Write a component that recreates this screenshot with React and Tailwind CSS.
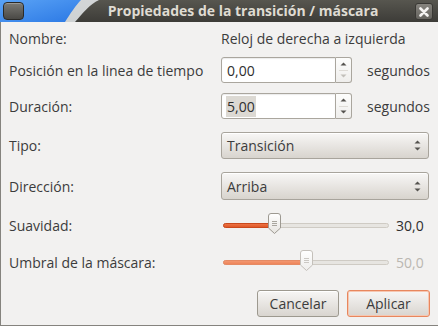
import React from 'react'

function ArrowUp({ disabled }) {
  return (
    <svg width="7" height="4" viewBox="0 0 7 4">
      <path d="M0.5 3.5 L3.5 0.5 L6.5 3.5 Z" fill={disabled ? '#c2bfba' : '#55534f'} />
    </svg>
  )
}

function ArrowDown({ disabled }) {
  return (
    <svg width="7" height="4" viewBox="0 0 7 4">
      <path d="M0.5 0.5 L3.5 3.5 L6.5 0.5 Z" fill={disabled ? '#c2bfba' : '#55534f'} />
    </svg>
  )
}

function Spin({ value, downDisabled, selected }) {
  return (
    <div className="flex w-[131px] h-[26px]">
      <div className="flex-1 flex items-center pl-[4px] bg-white border border-[#aaa69e] rounded-l-[3px] shadow-[inset_0_1px_1px_rgba(0,0,0,0.08)]">
        <span className={selected ? 'bg-[#dcd9d3] text-[#2e2e2e] px-[1px]' : 'text-[#2e2e2e] px-[1px]'}>{value}</span>
      </div>
      <div className="w-[16px] flex flex-col bg-gradient-to-b from-[#fdfdfc] to-[#efeeec] border border-l-0 border-[#aaa69e] rounded-r-[3px]">
        <div className="flex-1 flex items-center justify-center pt-[1px]">
          <ArrowUp />
        </div>
        <div className="h-px mx-[3px] bg-[#dedbd6]" />
        <div className="flex-1 flex items-center justify-center pb-[1px]">
          <ArrowDown disabled={downDisabled} />
        </div>
      </div>
    </div>
  )
}

function Combo({ label }) {
  return (
    <div className="w-[208px] h-full flex items-center justify-between pl-[5px] pr-[7px] rounded-[3px] border border-[#a8a49c] bg-gradient-to-b from-[#f8f7f6] to-[#d8d4ce] shadow-[inset_0_1px_0_#ffffff]">
      <span className="text-[#3c3c3c]">{label}</span>
      <div className="flex flex-col gap-[3px]">
        <ArrowUp />
        <ArrowDown />
      </div>
    </div>
  )
}

function Slider({ pos, value, disabled }) {
  const fillFrom = disabled ? '#f39a74' : '#ef7648'
  const fillTo = disabled ? '#ee8256' : '#dd5423'
  const fillStroke = disabled ? '#e58a64' : '#c9491d'
  const knobStroke = disabled ? '#c4c0ba' : '#9d9991'
  const id = disabled ? 'b' : 'a'
  return (
    <div className="flex items-center h-full">
      <svg width="170" height="24" viewBox="0 0 170 24" className="ml-[1px]">
        <defs>
          <linearGradient id={'fill' + id} x1="0" y1="0" x2="0" y2="1">
            <stop offset="0" stopColor={fillFrom} />
            <stop offset="1" stopColor={fillTo} />
          </linearGradient>
          <linearGradient id={'knob' + id} x1="0" y1="0" x2="0" y2="1">
            <stop offset="0" stopColor="#ffffff" />
            <stop offset="1" stopColor={disabled ? '#eeedeb' : '#e6e3df'} />
          </linearGradient>
        </defs>
        <rect x="1.5" y="10.5" width="165" height="4" rx="2" fill="#e7e5e1" stroke="#cfcbc4" />
        <rect x="1.5" y="10.5" width={pos + 3} height="4" rx="2" fill={'url(#fill' + id + ')'} stroke={fillStroke} />
        <path
          d={`M${pos + 0.5} 3 a2.5 2.5 0 0 1 2.5 -2.5 h7 a2.5 2.5 0 0 1 2.5 2.5 v12 l-6 5.5 l-6 -5.5 Z`}
          fill={'url(#knob' + id + ')'}
          stroke={knobStroke}
        />
        <g stroke={disabled ? '#cbc8c3' : '#a9a59e'}>
          <line x1={pos + 4} y1="8.5" x2={pos + 9} y2="8.5" />
          <line x1={pos + 4} y1="10.5" x2={pos + 9} y2="10.5" />
          <line x1={pos + 4} y1="12.5" x2={pos + 9} y2="12.5" />
        </g>
      </svg>
      <span className={disabled ? 'ml-[4px] text-[#bab7b1]' : 'ml-[4px] text-[#2e2e2e]'}>{value}</span>
    </div>
  )
}

function Row({ label, className, children }) {
  return (
    <div className={'flex items-center ' + className}>
      <div className="w-[212px] text-[#3c3c3c]">{label}</div>
      <div className="flex items-center h-full">{children}</div>
    </div>
  )
}

export default function App() {
  return (
    <div className="w-[438px] h-[326px] flex flex-col overflow-hidden bg-[#f2f1f0] font-['Open_Sans',sans-serif] text-[14px]">
      {/* Title bar */}
      <div className="relative h-[22px] shrink-0 flex items-center justify-center pl-[48px] bg-gradient-to-b from-[#57564f] to-[#3d3c38]">
        <svg className="absolute left-0 top-0" width="110" height="22" viewBox="0 0 110 22">
          <defs>
            <linearGradient id="blue" x1="0" y1="0" x2="1" y2="1">
              <stop offset="0" stopColor="#5aa3f6" />
              <stop offset="1" stopColor="#2b78e4" />
            </linearGradient>
          </defs>
          <path d="M0 0 H99 C90 4 82 14 75 22 H0 Z" fill="#e9ecef" opacity="0.85" />
          <path d="M0 0 H81 C76 5 70 14 65 22 H0 Z" fill="url(#blue)" />
        </svg>
        <div className="absolute left-[3px] top-[2px] w-[21px] h-[18px] rounded-[4px] border border-[#2b2a27] bg-gradient-to-b from-[#7b7a75] to-[#4a4945] shadow-[inset_0_1px_0_rgba(255,255,255,0.25)]" />
        <span className="relative font-bold text-[#dfdbd2] text-[14px] leading-none">Propiedades de la transición / máscara</span>
        <div className="absolute right-[5px] top-[3px] w-[18px] h-[17px] rounded-[3px] border border-[#3a3935] bg-gradient-to-b from-[#86847e] to-[#66645f] flex items-center justify-center">
          <svg width="10" height="10" viewBox="0 0 10 10">
            <path d="M1.5 1.5 L8.5 8.5 M8.5 1.5 L1.5 8.5" stroke="#f4f3f1" strokeWidth="2.6" strokeLinecap="round" />
          </svg>
        </div>
      </div>

      {/* Body */}
      <div className="flex-1 flex flex-col pl-[8px] border-l border-b border-[#85837e]">
        <Row label="Nombre:" className="mt-[5px] h-[22px]">
          <span className="text-[#3c3c3c]">Reloj de derecha a izquierda</span>
        </Row>
        <Row label="Posición en la linea de tiempo" className="mt-[8px] h-[26px]">
          <Spin value="0,00" downDisabled />
          <span className="ml-[15px] text-[#3c3c3c]">segundos</span>
        </Row>
        <Row label="Duración:" className="mt-[10px] h-[26px]">
          <Spin value="5,00" selected />
          <span className="ml-[15px] text-[#3c3c3c]">segundos</span>
        </Row>
        <Row label="Tipo:" className="mt-[13px] h-[27px]">
          <Combo label="Transición" />
        </Row>
        <Row label="Dirección:" className="mt-[13px] h-[28px]">
          <Combo label="Arriba" />
        </Row>
        <Row label="Suavidad:" className="mt-[13px] h-[24px]">
          <Slider pos={46} value="30,0" />
        </Row>
        <Row label="Umbral de la máscara:" className="mt-[13px] h-[24px]">
          <Slider pos={78} value="50,0" disabled />
        </Row>
        <div className="mt-[16px] h-[27px] flex justify-end gap-[8px] pr-[8px]">
          <button className="w-[82px] h-full rounded-[3px] border border-[#9d998f] bg-gradient-to-b from-[#f7f6f5] to-[#d9d5cf] shadow-[inset_0_1px_0_#ffffff] text-[#3c3c3c]">
            Cancelar
          </button>
          <button className="w-[83px] h-full rounded-[3px] border border-[#e8875e] bg-gradient-to-b from-[#f7f6f5] to-[#d9d5cf] shadow-[inset_0_0_0_1px_#f6c7b1] text-[#3c3c3c]">
            Aplicar
          </button>
        </div>
      </div>
    </div>
  )
}
